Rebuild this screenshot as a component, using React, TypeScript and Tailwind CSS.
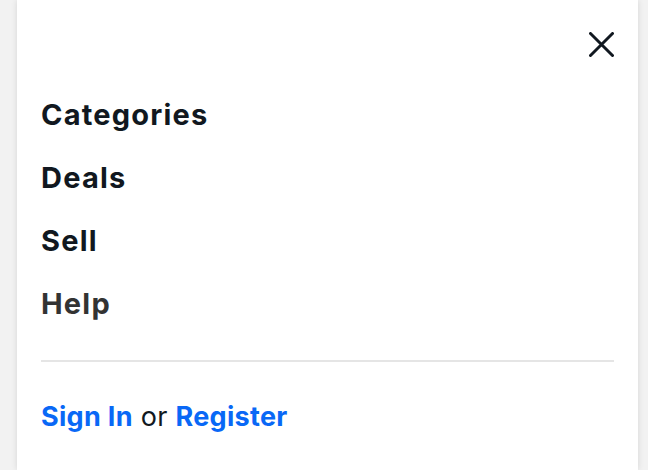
import * as React from "react";

const items = [
  { label: "Categories", tone: "text-[#111820]" },
  { label: "Deals", tone: "text-[#111820]" },
  { label: "Sell", tone: "text-[#111820]" },
  { label: "Help", tone: "text-[#333333]" },
];

export default function App() {
  return (
    <div className="h-[470px] w-[648px] overflow-hidden bg-[#f2f2f2] font-['Inter',sans-serif]">
      <div className="ml-[17px] h-full w-[621px] bg-white px-6 shadow-[0_0_6px_rgba(0,0,0,0.12)]">
        {/* header */}
        <div className="flex h-[83px] justify-end pt-[32px]">
          <button aria-label="Close" className="h-[25px] w-[25px] text-[#111820]">
            <svg viewBox="0 0 25 25" width="25" height="25" fill="none" stroke="currentColor" strokeWidth="3" strokeLinecap="round">
              <path d="M1.5 1.5 L23.5 23.5 M23.5 1.5 L1.5 23.5" />
            </svg>
          </button>
        </div>

        <nav className="flex flex-col">
          {items.map((item) => (
            <a key={item.label} className={`text-[29px] font-bold leading-[63px] tracking-[1.2px] ${item.tone}`}>
              {item.label}
            </a>
          ))}
        </nav>

        <hr className="mt-[25px] border-0 border-t-2 border-[#e5e5e5]" />

        <p className="mt-[23px] text-[27px] leading-[63px] tracking-[0.3px] text-[#111820]">
          <a className="font-bold text-[#0968f6]">Sign In</a> or{" "}
          <a className="font-bold text-[#0968f6]">Register</a>
        </p>
      </div>
    </div>
  );
}
